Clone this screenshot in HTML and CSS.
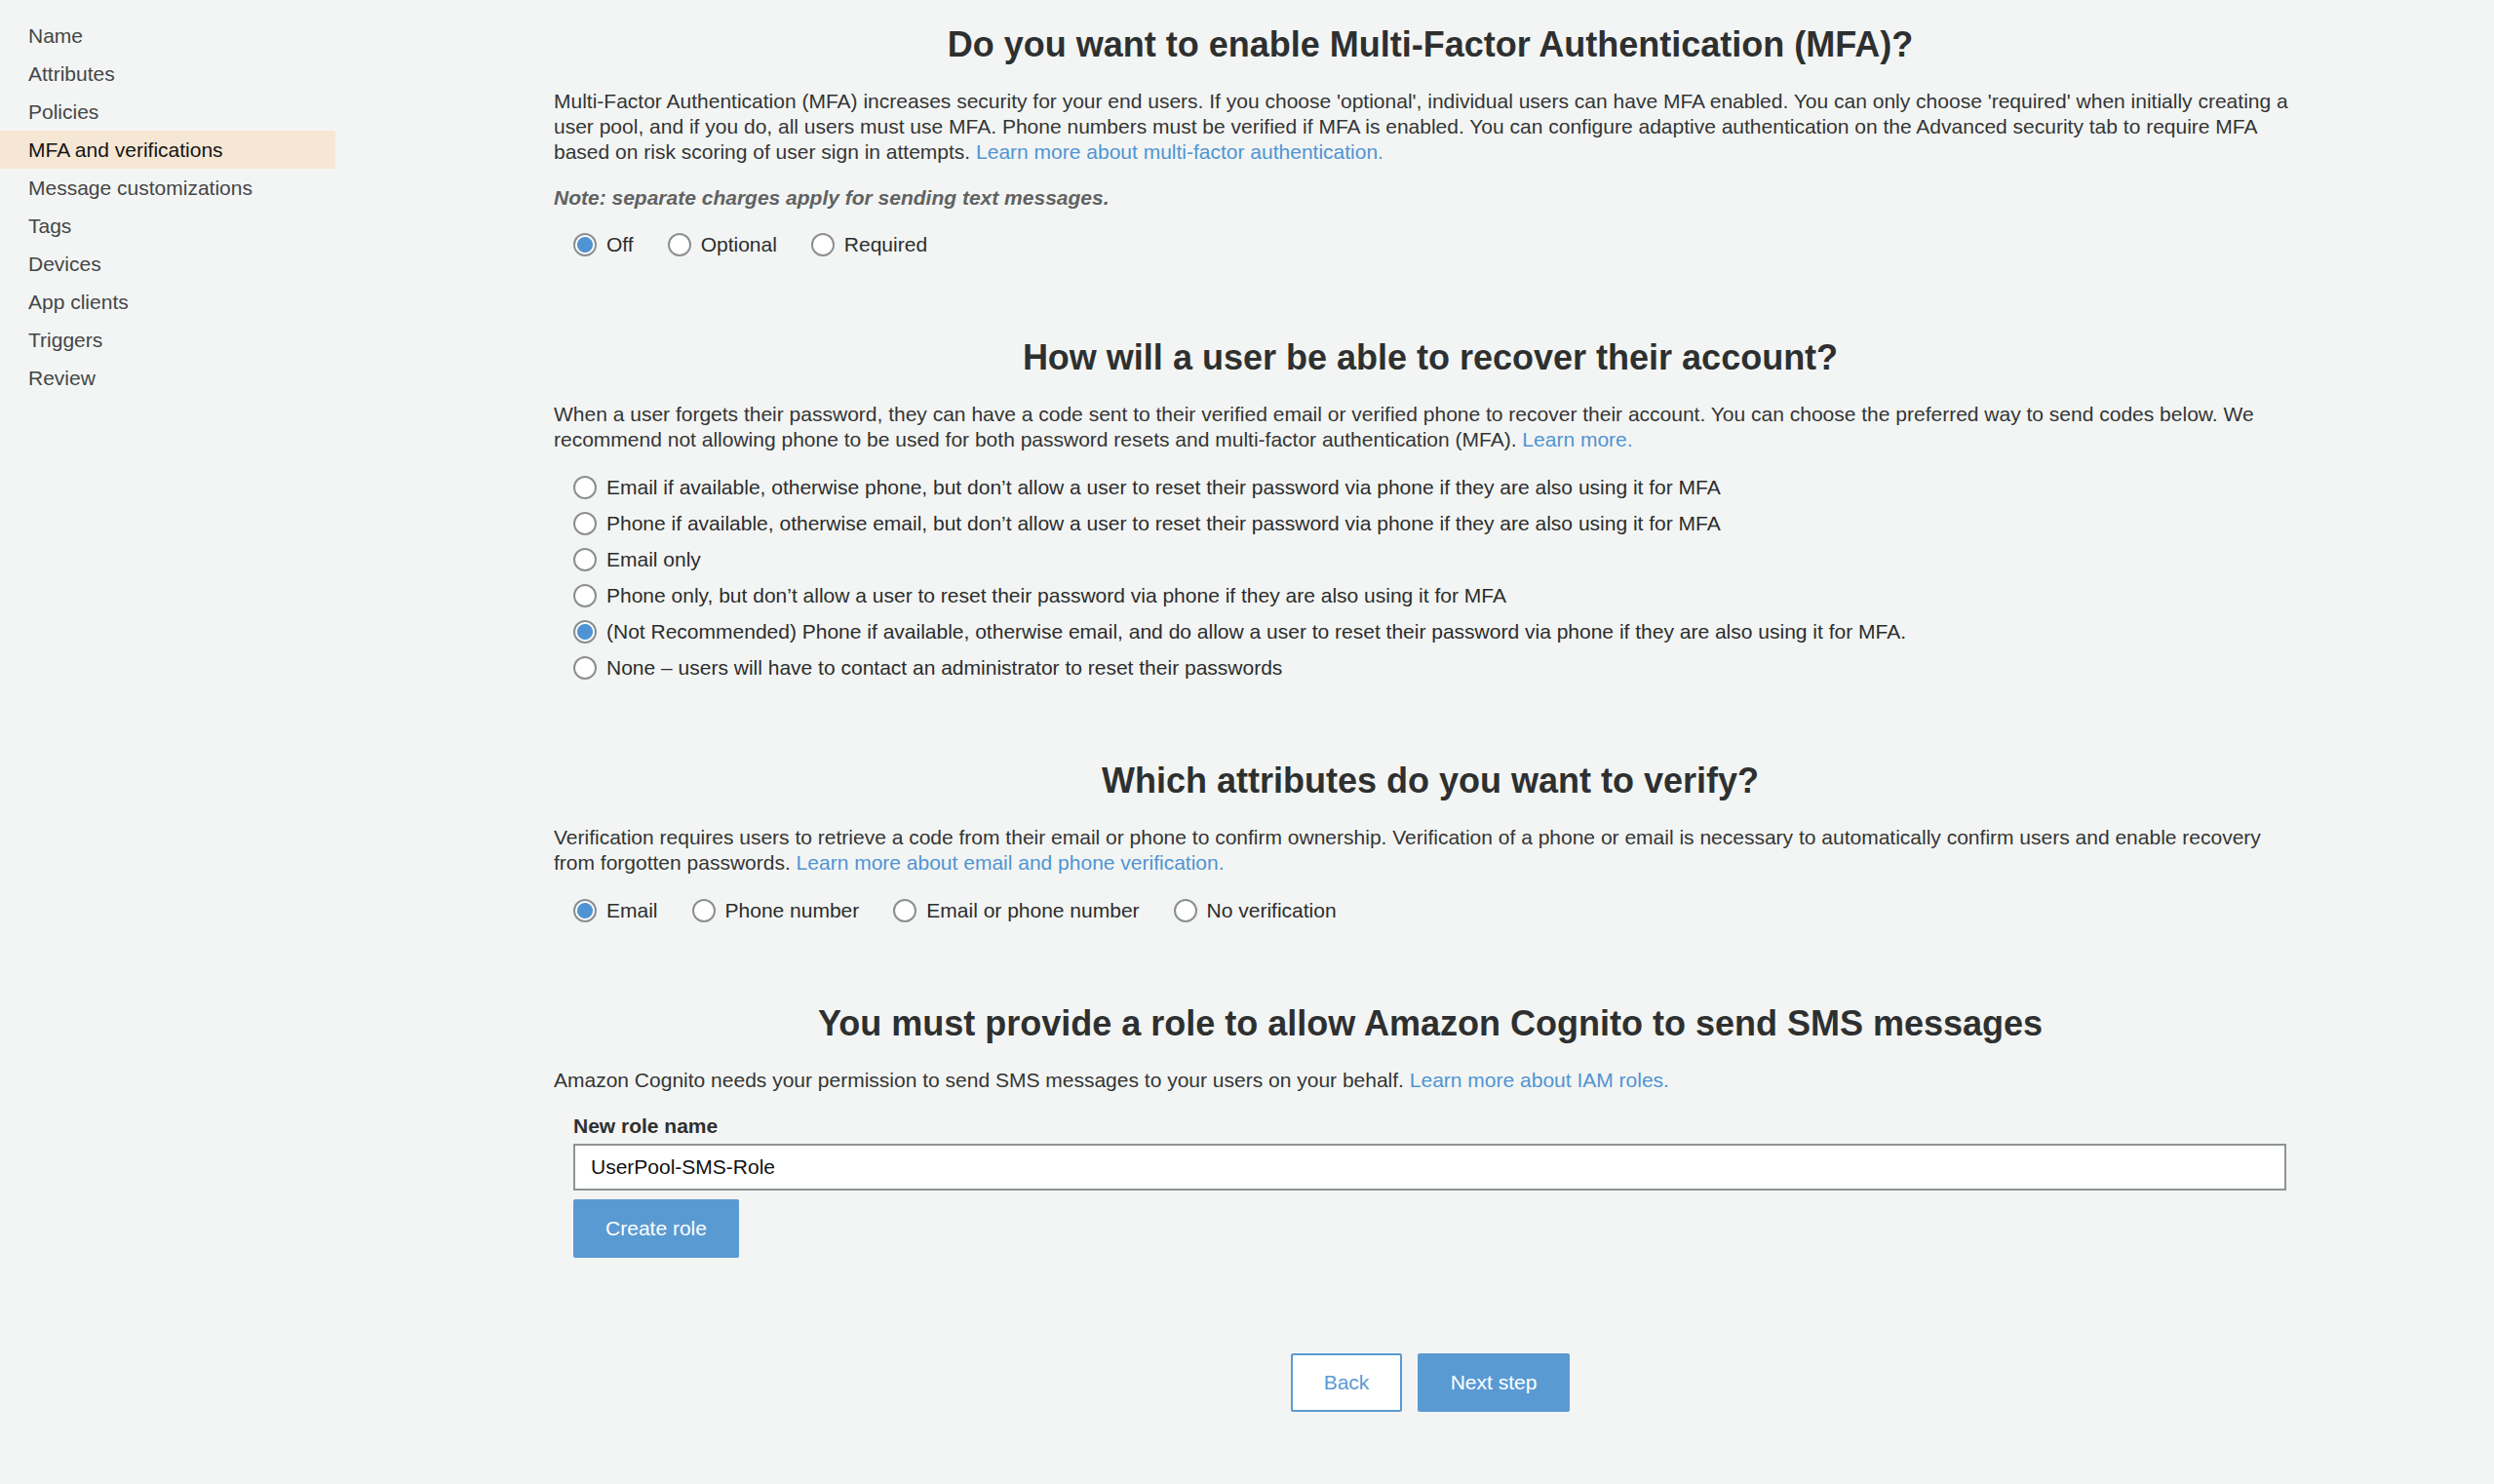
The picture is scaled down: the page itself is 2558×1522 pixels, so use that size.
FILE: index.html
```html
<!DOCTYPE html>
<html lang="en">
<head>
<meta charset="utf-8">
<title>MFA and verifications</title>
<link rel="stylesheet" href="styles.css">
</head>
<body>
<div class="page">
  <nav class="sidebar">
    <div class="nav-item">Name</div>
    <div class="nav-item">Attributes</div>
    <div class="nav-item">Policies</div>
    <div class="nav-item active">MFA and verifications</div>
    <div class="nav-item">Message customizations</div>
    <div class="nav-item">Tags</div>
    <div class="nav-item">Devices</div>
    <div class="nav-item">App clients</div>
    <div class="nav-item">Triggers</div>
    <div class="nav-item">Review</div>
  </nav>
  <main class="main">
    <section class="section s1">
      <h2 class="title">Do you want to enable Multi-Factor Authentication (MFA)?</h2>
      <p class="desc">Multi-Factor Authentication (MFA) increases security for your end users. If you choose 'optional', individual users can have MFA enabled. You can only choose 'required' when initially creating a user pool, and if you do, all users must use MFA. Phone numbers must be verified if MFA is enabled. You can configure adaptive authentication on the Advanced security tab to require MFA based on risk scoring of user sign in attempts. <a class="link" href="#">Learn more about multi-factor authentication.</a></p>
      <p class="note">Note: separate charges apply for sending text messages.</p>
      <div class="radio-row">
        <label class="radio"><span class="dot checked"></span>Off</label>
        <label class="radio"><span class="dot"></span>Optional</label>
        <label class="radio"><span class="dot"></span>Required</label>
      </div>
    </section>

    <section class="section s2">
      <h2 class="title">How will a user be able to recover their account?</h2>
      <p class="desc">When a user forgets their password, they can have a code sent to their verified email or verified phone to recover their account. You can choose the preferred way to send codes below. We recommend not allowing phone to be used for both password resets and multi-factor authentication (MFA). <a class="link" href="#">Learn more.</a></p>
      <div class="radio-list">
        <label class="radio"><span class="dot"></span>Email if available, otherwise phone, but don’t allow a user to reset their password via phone if they are also using it for MFA</label>
        <label class="radio"><span class="dot"></span>Phone if available, otherwise email, but don’t allow a user to reset their password via phone if they are also using it for MFA</label>
        <label class="radio"><span class="dot"></span>Email only</label>
        <label class="radio"><span class="dot"></span>Phone only, but don’t allow a user to reset their password via phone if they are also using it for MFA</label>
        <label class="radio"><span class="dot checked"></span>(Not Recommended) Phone if available, otherwise email, and do allow a user to reset their password via phone if they are also using it for MFA.</label>
        <label class="radio"><span class="dot"></span>None – users will have to contact an administrator to reset their passwords</label>
      </div>
    </section>

    <section class="section s3">
      <h2 class="title">Which attributes do you want to verify?</h2>
      <p class="desc">Verification requires users to retrieve a code from their email or phone to confirm ownership. Verification of a phone or email is necessary to automatically confirm users and enable recovery from forgotten passwords. <a class="link" href="#">Learn more about email and phone verification.</a></p>
      <div class="radio-row">
        <label class="radio"><span class="dot checked"></span>Email</label>
        <label class="radio"><span class="dot"></span>Phone number</label>
        <label class="radio"><span class="dot"></span>Email or phone number</label>
        <label class="radio"><span class="dot"></span>No verification</label>
      </div>
    </section>

    <section class="section s4">
      <h2 class="title">You must provide a role to allow Amazon Cognito to send SMS messages</h2>
      <p class="desc">Amazon Cognito needs your permission to send SMS messages to your users on your behalf. <a class="link" href="#">Learn more about IAM roles.</a></p>
      <div class="field">
        <div class="field-label">New role name</div>
        <div class="input">UserPool-SMS-Role</div>
        <button class="btn primary create">Create role</button>
      </div>
    </section>

    <div class="footer">
      <button class="btn secondary back">Back</button>
      <button class="btn primary next">Next step</button>
    </div>
  </main>
</div>
</body>
</html>
```

FILE: styles.css
```css
html, body {
  margin: 0;
  padding: 0;
  background: #f3f5f4;
}
body {
  font-family: "Liberation Sans", Arial, sans-serif;
  color: #333535;
  min-height: 1522px;
}
.page {
  display: flex;
  align-items: flex-start;
}
.sidebar {
  width: 344px;
  flex: none;
  padding-top: 17px;
}
.nav-item {
  height: 39px;
  line-height: 39px;
  padding-left: 29px;
  font-size: 21px;
  color: #444646;
}
.nav-item.active {
  background: #f6e7d5;
  color: #141414;
}
.main {
  flex: none;
  width: 1798px;
  margin-left: 224px;
  padding-top: 26px;
}
.s1 { margin-top: 0; }
.s2 { margin-top: 83px; }
.s3 { margin-top: 78px; }
.s4 { margin-top: 83px; }
.title {
  margin: 0 0 25px;
  text-align: center;
  font-size: 36px;
  line-height: 40px;
  font-weight: bold;
  color: #2e3030;
}
.desc {
  margin: 0 0 21px;
  font-size: 21px;
  line-height: 26px;
}
.s3 .desc {
  margin-bottom: 23px;
}
.link {
  color: #4f94d3;
  text-decoration: none;
}
.note {
  margin: 0 0 22px;
  font-size: 21px;
  line-height: 26px;
  font-style: italic;
  font-weight: bold;
  color: #606262;
}
.radio-row {
  display: flex;
  gap: 35px;
  padding-left: 20px;
}
.radio-list {
  display: flex;
  flex-direction: column;
  padding-left: 20px;
  margin-top: -4px;
}
.radio {
  display: flex;
  align-items: center;
  gap: 10px;
  font-size: 21px;
  line-height: 26px;
  color: #2b2d2d;
}
.radio-list .radio {
  height: 37px;
}
.dot {
  box-sizing: border-box;
  width: 24px;
  height: 24px;
  border-radius: 50%;
  border: 2px solid #8c8f91;
  background: #fff;
  flex: none;
}
.dot.checked {
  background: radial-gradient(circle, #4f93d2 0 7.5px, #fff 8.5px);
}
.field {
  padding-left: 20px;
  padding-right: 21px;
}
.field-label {
  font-size: 21px;
  line-height: 26px;
  font-weight: bold;
  color: #2e3030;
  margin-bottom: 5px;
}
.input {
  box-sizing: border-box;
  height: 48px;
  border: 2px solid #8e9396;
  background: #fff;
  padding: 0 16px;
  font-size: 21px;
  line-height: 44px;
  color: #111;
}
.btn {
  box-sizing: border-box;
  height: 60px;
  font-family: "Liberation Sans", Arial, sans-serif;
  font-size: 21px;
  border-radius: 2px;
  cursor: pointer;
}
.primary {
  background: #5a9ad3;
  border: none;
  color: #fff;
}
.secondary {
  background: #fff;
  border: 2px solid #5a9ad3;
  color: #5a9ad3;
}
.create {
  margin-top: 9px;
  width: 170px;
}
.footer {
  display: flex;
  justify-content: center;
  gap: 16px;
  margin-top: 98px;
}
.back {
  width: 114px;
}
.next {
  width: 156px;
}
```
